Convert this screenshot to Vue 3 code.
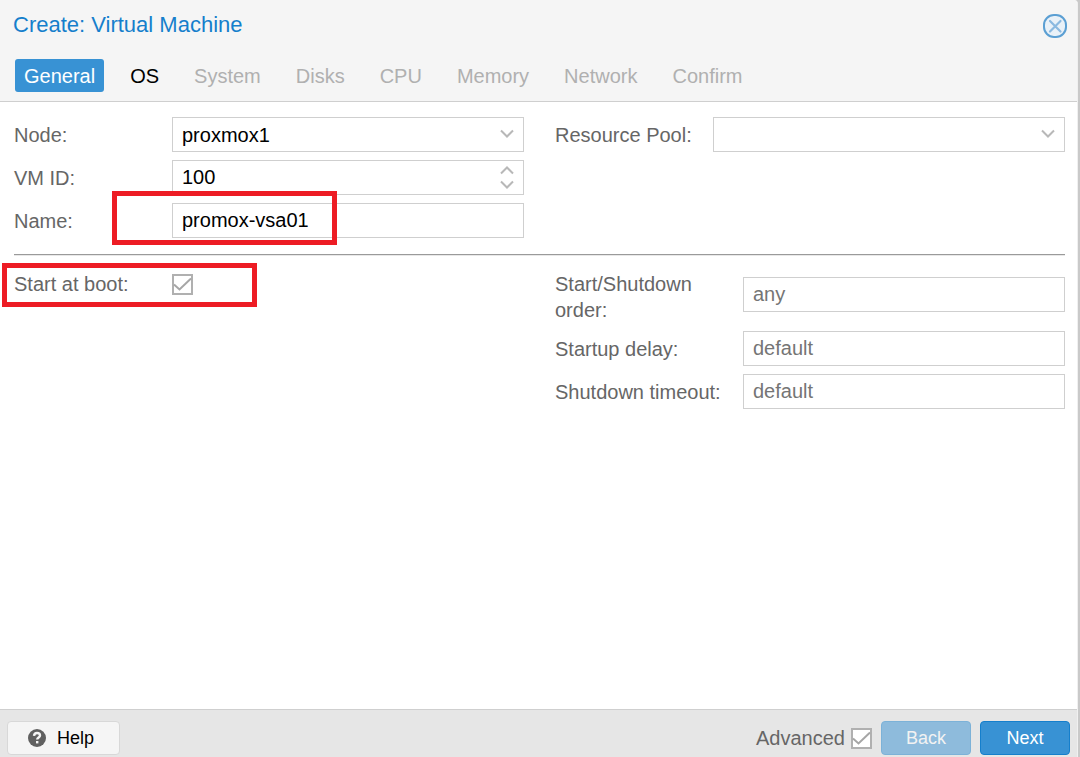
<script setup>
import { ref } from 'vue'

const tabs = [
  { label: 'General', state: 'active' },
  { label: 'OS', state: 'ready' },
  { label: 'System', state: 'locked' },
  { label: 'Disks', state: 'locked' },
  { label: 'CPU', state: 'locked' },
  { label: 'Memory', state: 'locked' },
  { label: 'Network', state: 'locked' },
  { label: 'Confirm', state: 'locked' },
]

const node = ref('proxmox1')
const pool = ref('')
const vmid = ref(100)
const name = ref('promox-vsa01')
const onboot = ref(true)
const order = ref('')
const delay = ref('')
const timeout = ref('')
const advanced = ref(true)
</script>

<template>
  <form class="dialog" @submit.prevent>
    <header class="head">
      <div class="title-bar">
        <h1>Create: Virtual Machine</h1>
        <button type="button" class="close" aria-label="Close">
          <svg width="24" height="24" viewBox="0 0 24 24" fill="none">
            <rect x="1" y="1" width="22" height="22" rx="10" fill="#e9f1f8" stroke="#5b9fd3" stroke-width="2" />
            <path d="M7 7l10.500 10.500M17.500 7L7 17.500" stroke="#8bb9e0" stroke-width="2.200" stroke-linecap="round" />
          </svg>
        </button>
      </div>
      <nav class="tabs">
        <button
          v-for="t in tabs"
          :key="t.label"
          type="button"
          :class="['tab', t.state]"
          :disabled="t.state === 'locked'"
        >{{ t.label }}</button>
      </nav>
    </header>

    <main class="body">
      <div class="columns">
        <div class="column">
          <div class="row">
            <label for="node">Node:</label>
            <div class="field">
              <select id="node" v-model="node"><option>proxmox1</option></select>
              <svg class="chevron" width="14" height="10" viewBox="0 0 14 10"><path d="M1 1.500L7 7.500l6-6" /></svg>
            </div>
          </div>
          <div class="row">
            <label for="vmid">VM ID:</label>
            <div class="field">
              <input id="vmid" v-model="vmid" type="text" inputmode="numeric" />
              <div class="spinner">
                <button type="button" aria-label="Increase" @click="vmid++">
                  <svg width="14" height="9" viewBox="0 0 14 9"><path d="M1 7.500l6-6 6 6" /></svg>
                </button>
                <button type="button" aria-label="Decrease" @click="vmid--">
                  <svg width="14" height="9" viewBox="0 0 14 9"><path d="M1 1.500l6 6 6-6" /></svg>
                </button>
              </div>
            </div>
          </div>
          <div class="row">
            <label for="name">Name:</label>
            <div class="field"><input id="name" v-model="name" type="text" /></div>
          </div>
        </div>
        <div class="column">
          <div class="row">
            <label for="pool">Resource Pool:</label>
            <div class="field">
              <select id="pool" v-model="pool"><option value=""></option></select>
              <svg class="chevron" width="14" height="10" viewBox="0 0 14 10"><path d="M1 1.500L7 7.500l6-6" /></svg>
            </div>
          </div>
        </div>
      </div>

      <hr />

      <div class="columns">
        <div class="column">
          <div class="row">
            <label for="onboot">Start at boot:</label>
            <span class="check">
              <input id="onboot" v-model="onboot" type="checkbox" />
              <svg v-if="onboot" width="21" height="21" viewBox="0 0 21 21"><path d="M2 10.500l5.500 5L19 4.500" /></svg>
            </span>
          </div>
        </div>
        <div class="column wide">
          <div class="row two-line">
            <label for="order">Start/Shutdown order:</label>
            <div class="field"><input id="order" v-model="order" type="text" placeholder="any" /></div>
          </div>
          <div class="row">
            <label for="delay">Startup delay:</label>
            <div class="field"><input id="delay" v-model="delay" type="text" placeholder="default" /></div>
          </div>
          <div class="row">
            <label for="timeout">Shutdown timeout:</label>
            <div class="field"><input id="timeout" v-model="timeout" type="text" placeholder="default" /></div>
          </div>
        </div>
      </div>
    </main>

    <footer class="foot">
      <button type="button" class="btn help">
        <svg width="18" height="18" viewBox="0 0 18 18">
          <circle cx="9" cy="9" r="9" fill="#606060" />
          <path d="M6 6.800C6.200 4.900 7.300 4 9 4c1.800 0 3 1 3 2.500 0 1.900-2.800 2-2.800 4" fill="none" stroke="#f5f5f5" stroke-width="2.400" />
          <rect x="8" y="12" width="2.400" height="2.400" fill="#f5f5f5" />
        </svg>
        Help
      </button>
      <div class="actions">
        <label for="advanced">Advanced</label>
        <span class="check">
          <input id="advanced" v-model="advanced" type="checkbox" />
          <svg v-if="advanced" width="21" height="21" viewBox="0 0 21 21"><path d="M2 10.500l5.500 5L19 4.500" /></svg>
        </span>
        <button type="button" class="btn primary" disabled>Back</button>
        <button type="submit" class="btn primary">Next</button>
      </div>
    </footer>

    <div class="mark mark-name"></div>
    <div class="mark mark-boot"></div>
  </form>
</template>

<style>
body {
  margin: 0;
  background: #c9c9c9;
}
</style>

<style scoped>
.dialog,
.dialog * {
  box-sizing: border-box;
}

.dialog {
  position: relative;
  display: flex;
  flex-direction: column;
  min-height: 100vh;
  margin-right: 2px;
  border-right: 1px solid #f0f0f0;
  border-top-right-radius: 4px;
  background: #fff;
  color: #666;
  font: 20px/26px "Liberation Sans", Arial, sans-serif;
}

button,
input,
select {
  margin: 0;
  font: inherit;
}

.head {
  padding: 12px 10px 9px 13px;
  border-bottom: 1px solid #cfcfcf;
  border-top-right-radius: 4px;
  background: #f5f5f5;
}

.title-bar {
  display: flex;
  align-items: flex-end;
  justify-content: space-between;
}

h1 {
  margin: 0;
  color: #157fcc;
  font-size: 22px;
  font-weight: 400;
  line-height: 26px;
}

.close {
  display: flex;
  padding: 0;
  border: 0;
  background: none;
}

.tabs {
  display: flex;
  gap: 17px;
  margin: 21px 0 0 2px;
}

.tab {
  height: 33px;
  padding: 0 9px;
  border: 0;
  border-radius: 3px;
  background: none;
  color: #b0b0b0;
}

.tab.active {
  background: #3892d4;
  color: #fff;
}

.tab.ready {
  color: #000;
}

.body {
  flex: 1;
  padding: 15px 12px 15px 14px;
}

.columns {
  display: flex;
  gap: 31px;
}

.column {
  display: flex;
  flex: 1;
  flex-direction: column;
  gap: 8px;
  min-width: 0;
}

.row {
  display: flex;
  align-items: center;
}

.row label {
  flex: none;
  width: 158px;
}

.wide .row label {
  width: 188px;
}

.two-line label {
  padding-right: 20px;
}

.two-line .field {
  margin-bottom: 5px;
}

.field {
  position: relative;
  flex: 1;
  min-width: 0;
}

.field input,
.field select {
  display: block;
  width: 100%;
  height: 35px;
  padding: 0 9px;
  border: 1px solid #cfcfcf;
  border-radius: 0;
  outline: 0;
  appearance: none;
  background: #fff;
  color: #000;
}

.field input::placeholder {
  color: #757575;
}

.field svg,
.check svg {
  display: block;
  fill: none;
  stroke: #b8b8b8;
  stroke-width: 2;
}

.chevron {
  position: absolute;
  top: 12px;
  right: 10px;
  pointer-events: none;
}

.spinner {
  position: absolute;
  top: 6px;
  right: 10px;
  display: flex;
  flex-direction: column;
  gap: 5px;
}

.spinner button {
  padding: 0;
  border: 0;
  background: none;
}

hr {
  height: 2px;
  margin: 16px 0 15px;
  border: 0;
  border-top: 1px solid #9a9a9a;
  border-bottom: 1px solid #e8e8e8;
}

.check {
  position: relative;
  width: 21px;
  height: 21px;
}

.check input {
  display: block;
  width: 21px;
  height: 21px;
  border: 2px solid #b0b0b0;
  appearance: none;
  background: #fff;
}

.check svg {
  position: absolute;
  inset: 0;
  stroke: #a6a6a6;
  pointer-events: none;
}

.foot {
  display: flex;
  align-items: center;
  justify-content: space-between;
  padding: 11px 7px 2px;
  border-top: 1px solid #cfcfcf;
  background: #e6e6e6;
}

.actions {
  display: flex;
  align-items: center;
  gap: 9px;
}

.actions label {
  margin-right: -3px;
}

.btn {
  display: flex;
  align-items: center;
  justify-content: center;
  height: 34px;
  border: 1px solid #d8d8d8;
  border-radius: 4px;
  font-size: 18px;
}

.help {
  gap: 11px;
  width: 113px;
  padding: 0 5px 0 0;
  background: #f5f5f5;
  color: #000;
}

.primary {
  width: 90px;
  padding: 0;
  border-color: #157fcc;
  background: #3892d4;
  color: #fff;
}

.primary:disabled {
  opacity: 0.5;
}

.mark {
  position: absolute;
  border: 5px solid #ed1c24;
  pointer-events: none;
}

.mark-name {
  top: 191px;
  left: 112px;
  width: 225px;
  height: 54px;
}

.mark-boot {
  top: 263px;
  left: 2px;
  width: 255px;
  height: 44px;
}
</style>
